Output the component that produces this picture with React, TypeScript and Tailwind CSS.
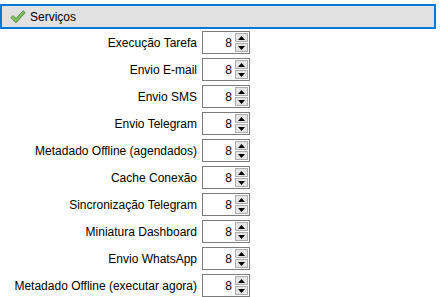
const services = [
  'Execução Tarefa',
  'Envio E-mail',
  'Envio SMS',
  'Envio Telegram',
  'Metadado Offline (agendados)',
  'Cache Conexão',
  'Sincronização Telegram',
  'Miniatura Dashboard',
  'Envio WhatsApp',
  'Metadado Offline (executar agora)',
]

function CheckIcon() {
  return (
    <svg width="16" height="14" viewBox="0 0 16 14">
      <defs>
        <linearGradient id="chk" x1="0" y1="0" x2="1" y2="1">
          <stop offset="0" stopColor="#b6e38c" />
          <stop offset="1" stopColor="#4c9d2f" />
        </linearGradient>
      </defs>
      <path
        d="M0.8 7.6 L3 5.6 L6 8.4 L13.2 0.8 L15.2 2.6 L6 12.8 Z"
        fill="url(#chk)"
        stroke="#4a8a35"
        strokeWidth="0.9"
        strokeLinejoin="round"
      />
    </svg>
  )
}

function SpinBox({ value }: { value: number }) {
  return (
    <div className="flex h-[23px] w-[48px] items-stretch border border-[#7a7a7a] bg-white">
      <div className="flex flex-1 items-center justify-end pr-[3px] text-[12px] text-black">{value}</div>
      <div className="my-px mr-px flex w-[13px] flex-col gap-px">
        <div className="flex flex-1 items-center justify-center border border-[#adadad] bg-[#e5e5e5]">
          <svg width="7" height="4" viewBox="0 0 7 4"><path d="M3.5 0 L7 4 L0 4 Z" fill="#000" /></svg>
        </div>
        <div className="flex flex-1 items-center justify-center border border-[#adadad] bg-[#e5e5e5]">
          <svg width="7" height="4" viewBox="0 0 7 4"><path d="M0 0 L7 0 L3.5 4 Z" fill="#000" /></svg>
        </div>
      </div>
    </div>
  )
}

export default function App() {
  return (
    <div className="h-[297px] w-[440px] overflow-hidden bg-white pt-[4px] font-['Liberation_Sans',Arial,sans-serif] text-[12px] text-black">
      <div className="mr-[4px] flex h-[25px] items-center gap-[4px] border-2 border-[#0078d7] bg-[#e1e1e1] pl-[8px]">
        <CheckIcon />
        <span>Serviços</span>
      </div>
      <div className="flex flex-col">
        {services.map(name => (
          <div key={name} className="flex h-[27px] items-center">
            <div className="w-[198px] pr-px text-right whitespace-nowrap">{name}</div>
            <div className="ml-[4px]">
              <SpinBox value={8} />
            </div>
          </div>
        ))}
      </div>
    </div>
  )
}
